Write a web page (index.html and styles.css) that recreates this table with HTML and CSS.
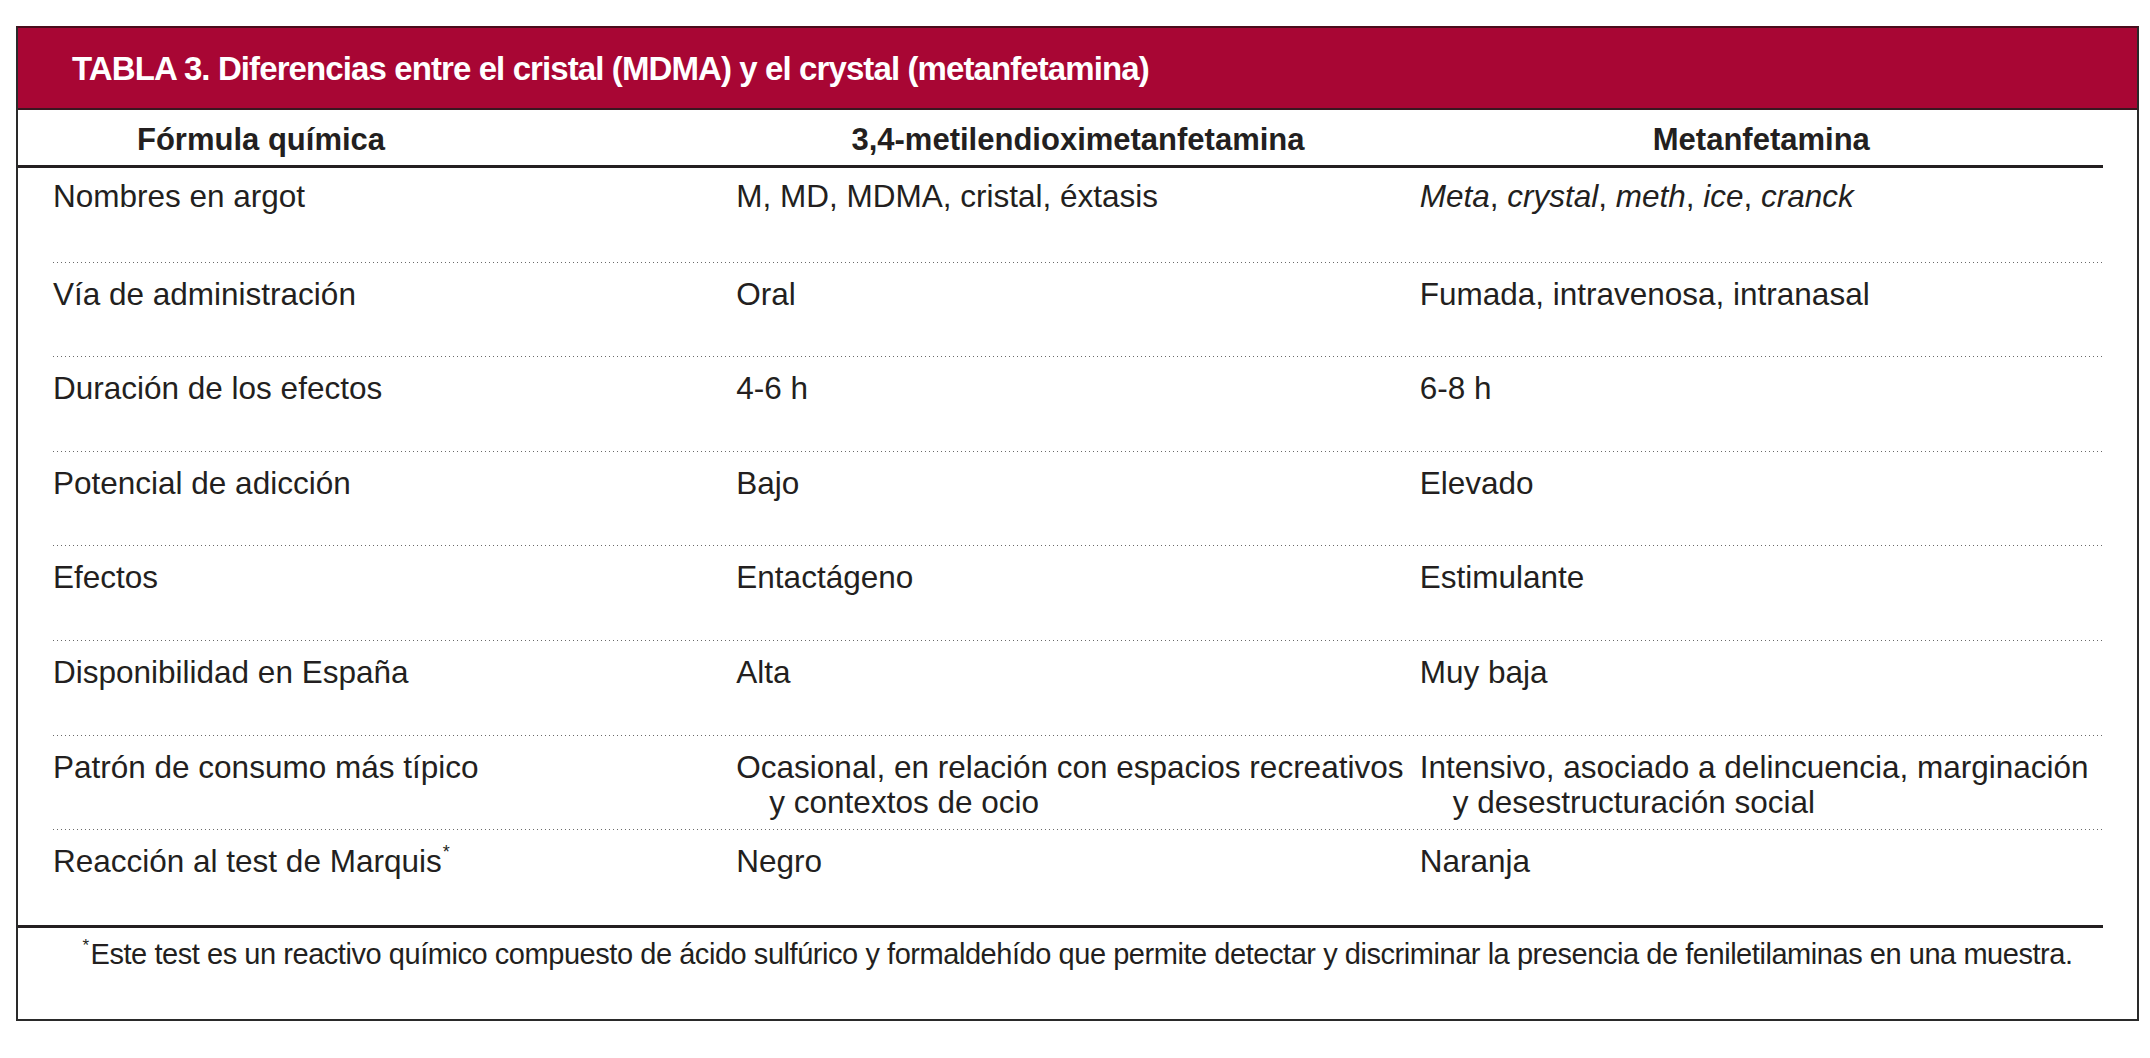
FILE: index.html
```html
<!DOCTYPE html>
<html lang="es">
<head>
<meta charset="utf-8">
<title>Tabla 3</title>
<link rel="stylesheet" href="styles.css">
</head>
<body>
<div class="frame">
  <div class="title-bar">TABLA 3. Diferencias entre el cristal (MDMA) y el crystal (metanfetamina)</div>
  <div class="table">
    <div class="thead">
      <div class="th th-first">Fórmula química</div>
      <div class="th">3,4-metilendioximetanfetamina</div>
      <div class="th">Metanfetamina</div>
    </div>
    <div class="tbody">
      <div class="row row-first">
        <div class="td">Nombres en argot</div>
        <div class="td">M, MD, MDMA, cristal, éxtasis</div>
        <div class="td"><i>Meta</i>, <i>crystal</i>, <i>meth</i>, <i>ice</i>, <i>cranck</i></div>
      </div>
      <div class="row">
        <div class="td">Vía de administración</div>
        <div class="td">Oral</div>
        <div class="td">Fumada, intravenosa, intranasal</div>
      </div>
      <div class="row">
        <div class="td">Duración de los efectos</div>
        <div class="td">4-6 h</div>
        <div class="td">6-8 h</div>
      </div>
      <div class="row">
        <div class="td">Potencial de adicción</div>
        <div class="td">Bajo</div>
        <div class="td">Elevado</div>
      </div>
      <div class="row">
        <div class="td">Efectos</div>
        <div class="td">Entactágeno</div>
        <div class="td">Estimulante</div>
      </div>
      <div class="row">
        <div class="td">Disponibilidad en España</div>
        <div class="td">Alta</div>
        <div class="td">Muy baja</div>
      </div>
      <div class="row">
        <div class="td">Patrón de consumo más típico</div>
        <div class="td hang">Ocasional, en relación con espacios recreativos<br>y contextos de ocio</div>
        <div class="td hang">Intensivo, asociado a delincuencia, marginación<br>y desestructuración social</div>
      </div>
      <div class="row row-last">
        <div class="td">Reacción al test de Marquis<sup class="ast">*</sup></div>
        <div class="td">Negro</div>
        <div class="td">Naranja</div>
      </div>
    </div>
  </div>
  <div class="footnote"><sup class="ast">*</sup>Este test es un reactivo químico compuesto de ácido sulfúrico y formaldehído que permite detectar y discriminar la presencia de feniletilaminas en una muestra.</div>
</div>
</body>
</html>
```

FILE: styles.css
```css
* {
  box-sizing: border-box;
}

html, body {
  margin: 0;
  padding: 0;
  background: #ffffff;
}

body {
  font-family: "Liberation Sans", Arial, sans-serif;
  color: #231f20;
}

.frame {
  margin: 26px 0 0 16px;
  width: 2123px;
  border: 2px solid #2a2a2a;
  border-top-color: #4a0c1c;
  background: #ffffff;
}

.title-bar {
  height: 82px;
  padding: 23px 0 0 54px;
  background: #a80634;
  border-bottom: 2px solid #3a1620;
  color: #ffffff;
  font-weight: bold;
  font-size: 33px;
  line-height: 36px;
  letter-spacing: -0.9px;
  white-space: nowrap;
}

.table {
  margin-right: 34px;
}

.thead {
  display: grid;
  grid-template-columns: repeat(3, 1fr);
  height: 58px;
  padding-left: 35px;
  border-bottom: 3px solid #231f20;
}

.th {
  padding-top: 12px;
  font-weight: bold;
  font-size: 31px;
  line-height: 35px;
  text-align: center;
  white-space: nowrap;
}

.th-first {
  text-align: left;
  padding-left: 84px;
}

.tbody {
  border-bottom: 3px solid #231f20;
}

.row {
  display: grid;
  grid-template-columns: repeat(3, 1fr);
  height: 94.6px;
  margin-left: 35px;
  background-image: linear-gradient(to right, #6a6a6a 0 1px, transparent 1px);
  background-size: 4px 1px;
  background-repeat: repeat-x;
  background-position: left bottom;
}

.row-last {
  background-image: none;
}

.td {
  padding-top: 14px;
  font-size: 31.5px;
  line-height: 35px;
  white-space: nowrap;
}

.row-first .td {
  padding-top: 11px;
}

.hang {
  padding-left: 33px;
  text-indent: -33px;
}

.ast {
  font-size: 18px;
  line-height: 0;
  vertical-align: 14px;
  margin-left: 1px;
}

.footnote {
  height: 91px;
  padding-top: 9px;
  font-size: 29px;
  line-height: 35px;
  letter-spacing: -0.45px;
  text-align: center;
  white-space: nowrap;
}

.footnote .ast {
  margin-left: 0;
  margin-right: 2px;
  font-size: 17px;
  vertical-align: 13px;
}
```
